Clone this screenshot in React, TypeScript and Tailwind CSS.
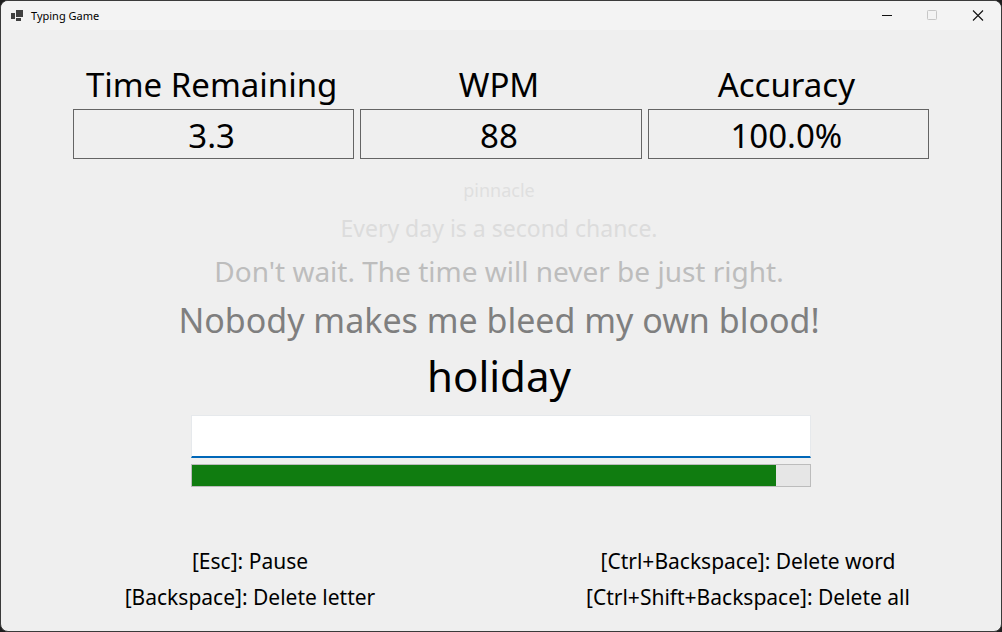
import { useState } from "react";

const stats = [
  { label: "Time Remaining", value: "3.3" },
  { label: "WPM", value: "88" },
  { label: "Accuracy", value: "100.0%" },
];

const upcoming = [
  { text: "pinnacle", style: "text-[18px] leading-[34px] text-[#dfdfdf]" },
  { text: "Every day is a second chance.", style: "text-[23px] leading-[42px] text-[#dcdcdc]" },
  { text: "Don't wait. The time will never be just right.", style: "text-[28px] leading-[45px] text-[#bdbdbd]" },
  { text: "Nobody makes me bleed my own blood!", style: "text-[34px] leading-[52px] text-[#7f7f7f]" },
  { text: "holiday", style: "text-[42px] leading-[60px] text-black" },
];

const shortcuts = [
  "[Esc]: Pause",
  "[Ctrl+Backspace]: Delete word",
  "[Backspace]: Delete letter",
  "[Ctrl+Shift+Backspace]: Delete all",
];

function TitleBar() {
  return (
    <header className="flex h-[29px] items-center bg-[#f3f3f3]">
      <svg className="ml-[10px] size-3" viewBox="0 0 12 12" fill="#404040" shapeRendering="crispEdges" aria-hidden="true">
        <rect x="5" y="0" width="7" height="7" />
        <rect x="0" y="3" width="4" height="6" />
        <rect x="5" y="8" width="5" height="3" />
      </svg>
      <h1 className="ml-2 flex-1 text-[11px] leading-4">Typing Game</h1>
      <button aria-label="Minimize" className="flex h-full w-[46px] items-center justify-center">
        <svg className="size-3" viewBox="0 0 12 12" stroke="#111" aria-hidden="true">
          <path d="M2 5.5h10" />
        </svg>
      </button>
      <button aria-label="Maximize" disabled className="flex h-full w-[46px] items-center justify-center">
        <svg className="size-3" viewBox="0 0 12 12" fill="none" stroke="#c6c6c6" aria-hidden="true">
          <rect x="1.5" y="0.5" width="9" height="9" rx="0.8" />
        </svg>
      </button>
      <button aria-label="Close" className="flex h-full w-[46px] items-center justify-center">
        <svg className="size-3" viewBox="0 0 12 12" stroke="#111" strokeWidth="1.1" aria-hidden="true">
          <path d="M1 0.5l10 10M11 0.5L1 10.5" />
        </svg>
      </button>
    </header>
  );
}

export default function App() {
  const [typed, setTyped] = useState("");

  return (
    <div className="flex min-h-screen bg-[#1e1e1e] font-['Noto_Sans',sans-serif] text-black">
      <div className="flex flex-1 flex-col overflow-hidden rounded-lg border border-[#3a3a3a] bg-[#efefef]">
        <TitleBar />
        <main className="flex flex-1 flex-col">
          <dl className="mx-[72px] mt-[31px] grid grid-cols-3 gap-[6px] text-center">
            {stats.map((stat) => (
              <div key={stat.label}>
                <dt className="pr-1 text-[33px] leading-[48px] whitespace-nowrap">{stat.label}</dt>
                <dd className="border border-[#646464] pt-1 pr-1 text-[33px] leading-[44px]">{stat.value}</dd>
              </div>
            ))}
          </dl>

          <div className="mt-[14px] pr-1 text-center whitespace-nowrap">
            {upcoming.map((line) => (
              <p key={line.text} className={line.style}>
                {line.text}
              </p>
            ))}
          </div>

          <div className="mx-[190px] mt-[9px] flex flex-col gap-[6px]">
            <input
              type="text"
              aria-label="Type the phrase"
              value={typed}
              onChange={(event) => setTyped(event.target.value)}
              className="h-[43px] w-full border border-b-2 border-[#e6e9ec] border-b-[#0067b8] bg-white px-2 text-center text-[28px] outline-none"
            />
            <progress
              aria-label="Time left"
              max={1000}
              value={945}
              className="h-[23px] w-full appearance-none border border-[#bcbcbc] bg-[#e6e6e6] [&::-webkit-progress-bar]:bg-[#e6e6e6] [&::-webkit-progress-value]:bg-[#107c10]"
            />
          </div>

          <ul className="mt-auto mb-4 grid grid-cols-2 pr-1 text-center text-[21px] leading-9 whitespace-nowrap">
            {shortcuts.map((shortcut) => (
              <li key={shortcut}>{shortcut}</li>
            ))}
          </ul>
        </main>
      </div>
    </div>
  );
}
